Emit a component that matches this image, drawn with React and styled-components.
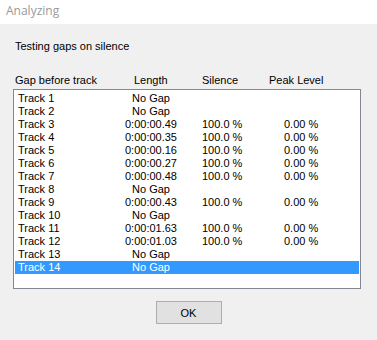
import styled, { createGlobalStyle } from "styled-components";

const GlobalStyle = createGlobalStyle`
  html, body {
    margin: 0;
    padding: 0;
    background: #f0f0f0;
  }
  body {
    font-family: "Liberation Sans", Arial, sans-serif;
    font-size: 11px;
    color: #000;
  }
`;

const TRACKS = [
  { name: "Track 1", length: "No Gap" },
  { name: "Track 2", length: "No Gap" },
  { name: "Track 3", length: "0:00:00.49", silence: "100.0 %", peak: "0.00 %" },
  { name: "Track 4", length: "0:00:00.35", silence: "100.0 %", peak: "0.00 %" },
  { name: "Track 5", length: "0:00:00.16", silence: "100.0 %", peak: "0.00 %" },
  { name: "Track 6", length: "0:00:00.27", silence: "100.0 %", peak: "0.00 %" },
  { name: "Track 7", length: "0:00:00.48", silence: "100.0 %", peak: "0.00 %" },
  { name: "Track 8", length: "No Gap" },
  { name: "Track 9", length: "0:00:00.43", silence: "100.0 %", peak: "0.00 %" },
  { name: "Track 10", length: "No Gap" },
  { name: "Track 11", length: "0:00:01.63", silence: "100.0 %", peak: "0.00 %" },
  { name: "Track 12", length: "0:00:01.03", silence: "100.0 %", peak: "0.00 %" },
  { name: "Track 13", length: "No Gap" },
  { name: "Track 14", length: "No Gap" },
];

export default function App() {
  const selected = 13;

  return (
    <>
      <GlobalStyle />
      <Window>
        <TitleBar>Analyzing</TitleBar>
        <Body>
          <Status>Testing gaps on silence</Status>

          <Header>
            <span>Gap before track</span>
            <span>Length</span>
            <span>Silence</span>
            <span>Peak Level</span>
          </Header>

          <ListBox>
            {TRACKS.map((t, i) => (
              <Row key={t.name} $selected={i === selected}>
                <span>{t.name}</span>
                <LengthCell>{t.length}</LengthCell>
                <SilenceCell>{t.silence}</SilenceCell>
                <span>{t.peak}</span>
              </Row>
            ))}
          </ListBox>

          <Footer>
            <Button type="button">OK</Button>
          </Footer>
        </Body>
      </Window>
    </>
  );
}

/* ================= styles ================= */

const Window = styled.div`
  width: 377px;
  height: 340px;
  background: #f0f0f0;
  display: flex;
  flex-direction: column;
  overflow: hidden;
`;

const TitleBar = styled.div`
  height: 24px;
  flex: 0 0 auto;
  background: #ffffff;
  color: #9a9a9a;
  font-family: "Open Sans", "Noto Sans", sans-serif;
  font-size: 12px;
  line-height: 22px;
  padding-left: 6px;
`;

const Body = styled.div`
  padding: 16px 16px 0 13px;
  display: flex;
  flex-direction: column;
`;

const Status = styled.div`
  line-height: 13px;
  padding-left: 2px;
`;

const Header = styled.div`
  margin-top: 21px;
  display: grid;
  grid-template-columns: 119px 68px 67px 1fr;
  height: 13px;
  line-height: 13px;
  padding-left: 2px;
  white-space: nowrap;
`;

const ListBox = styled.div`
  margin-top: 2px;
  width: 348px;
  height: 200px;
  box-sizing: border-box;
  border: 1px solid #828790;
  background: #ffffff;
  padding: 2px 1px;
`;

const Row = styled.div`
  display: grid;
  grid-template-columns: 100px 66px 100px 1fr;
  height: 13px;
  line-height: 13px;
  padding-left: 3px;
  background: ${(p) => (p.$selected ? "#3399ff" : "transparent")};
  color: ${(p) => (p.$selected ? "#ffffff" : "#000000")};
  white-space: nowrap;
`;

const LengthCell = styled.span`
  text-align: center;
`;

const SilenceCell = styled.span`
  padding-left: 18px;
`;

const Footer = styled.div`
  margin-top: 12px;
  display: flex;
  justify-content: center;
  padding-left: 3px;
`;

const Button = styled.button`
  width: 66px;
  height: 23px;
  box-sizing: border-box;
  background: #e1e1e1;
  border: 1px solid #adadad;
  border-radius: 0;
  font-family: "Liberation Sans", Arial, sans-serif;
  font-size: 11px;
  color: #000;
  padding: 0;
`;
